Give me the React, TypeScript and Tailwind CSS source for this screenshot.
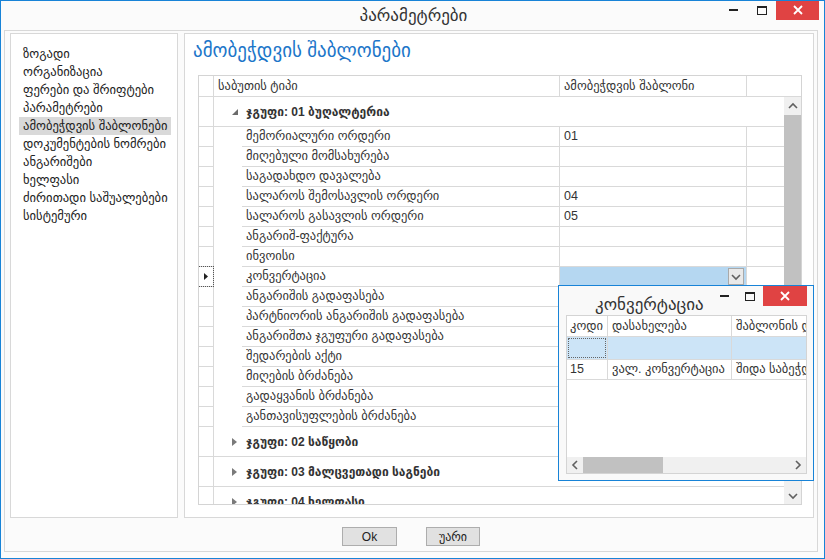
import React from "react";

const menu = [
  "ზოგადი",
  "ორგანიზაცია",
  "ფერები და შრიფტები",
  "პარამეტრები",
  "ამობეჭდვის შაბლონები",
  "დოკუმენტების ნომრები",
  "ანგარიშები",
  "ხელფასი",
  "ძირითადი საშუალებები",
  "სისტემური",
];

const rows: { name: string; tpl?: string; combo?: boolean }[] = [
  { name: "მემორიალური ორდერი", tpl: "01" },
  { name: "მიღებული მომსახურება" },
  { name: "საგადახდო დავალება" },
  { name: "სალაროს შემოსავლის ორდერი", tpl: "04" },
  { name: "სალაროს გასავლის ორდერი", tpl: "05" },
  { name: "ანგარიშ-ფაქტურა" },
  { name: "ინვოისი" },
  { name: "კონვერტაცია", combo: true },
  { name: "ანგარიშის გადაფასება" },
  { name: "პარტნიორის ანგარიშის გადაფასება" },
  { name: "ანგარიშთა ჯგუფური გადაფასება" },
  { name: "შედარების აქტი" },
  { name: "მიღების ბრძანება" },
  { name: "გადაყვანის ბრძანება" },
  { name: "განთავისუფლების ბრძანება" },
];

const Chevron = ({ dir }: { dir: "up" | "down" | "left" | "right" }) => {
  const pts = {
    up: "1,6 5,2 9,6",
    down: "1,2 5,6 9,2",
    left: "6,1 2,5 6,9",
    right: "2,1 6,5 2,9",
  }[dir];
  const vb = dir === "up" || dir === "down" ? "0 0 10 8" : "0 0 8 10";
  const size = dir === "up" || dir === "down" ? "w-[10px] h-[8px]" : "w-[8px] h-[10px]";
  return (
    <svg viewBox={vb} className={size}>
      <polyline points={pts} fill="none" stroke="#606060" strokeWidth="1.6" />
    </svg>
  );
};

const Expanded = () => (
  <svg viewBox="0 0 6 6" className="w-[6px] h-[6px]">
    <polygon points="6,0 6,6 0,6" fill="#6b6b6b" />
  </svg>
);

const Collapsed = () => (
  <svg viewBox="0 0 5 8" className="w-[5px] h-[8px]">
    <polygon points="0,0 5,4 0,8" fill="#7a7a7a" />
  </svg>
);

const WinButtons = ({ small }: { small?: boolean }) => (
  <div className="flex items-start">
    <div className={`${small ? "w-[26px]" : "w-[28px]"} h-[20px] flex items-center justify-center`}>
      <div className="w-[9px] h-[2px] bg-[#222]" />
    </div>
    <div className={`${small ? "w-[26px]" : "w-[29px]"} h-[20px] flex items-center justify-center`}>
      <div className="w-[10px] h-[9px] border border-[#222] border-t-[2px]" />
    </div>
    <div className={`${small ? "w-[44px]" : "w-[43px]"} h-[20px] bg-[#e04343] flex items-center justify-center`}>
      <svg viewBox="0 0 10 10" className="w-[10px] h-[10px]">
        <path d="M1 1 L9 9 M9 1 L1 9" stroke="white" strokeWidth="1.8" />
      </svg>
    </div>
  </div>
);

const GroupRow = ({ label, open }: { label: string; open?: boolean }) => (
  <div className="flex h-[30px] shrink-0">
    <div className="w-[15px] border-r border-b border-[#d9d9d9]" />
    <div className="flex-1 flex items-center border-b border-[#d9d9d9] pl-[18px]">
      <div className="w-[7px] flex items-center">{open ? <Expanded /> : <Collapsed />}</div>
      <span className="ml-[7px] font-bold text-[12px] text-[#333] whitespace-nowrap">{label}</span>
    </div>
  </div>
);

export default function App() {
  return (
    <div className="w-[825px] h-[559px] border border-[#1883d7] bg-[#fbfbfb] flex flex-col relative overflow-hidden text-[#222] [font-family:'Liberation_Sans','DejaVu_Sans',sans-serif]">
      {/* title */}
      <div className="h-[29px] shrink-0 flex relative">
        <div className="flex-1 flex items-center justify-center text-[17px] text-[#333] pl-[2px]">პარამეტრები</div>
        <div className="absolute right-[5px] top-[-1px]">
          <WinButtons />
        </div>
      </div>

      <div className="flex-1 flex flex-col ml-[3px] mr-[6px] mb-[6px] border border-[#d8d8d8]">
        <div className="flex-1 flex gap-[6px] pl-[5px] pr-[3px] pt-[2px]">
          {/* left menu */}
          <div className="w-[168px] bg-white border border-[#d8d8d8] pt-[11px] pl-[8px] pr-[6px]">
            {menu.map((m, i) => (
              <div
                key={m}
                className={`h-[18px] leading-[18px] px-[4px] text-[12.6px] whitespace-nowrap ${i === 4 ? "bg-[#d9d9d9]" : ""}`}
              >
                {m}
              </div>
            ))}
          </div>

          {/* right panel */}
          <div className="flex-1 bg-white border border-[#d8d8d8] flex flex-col">
            <div className="mt-[5px] pl-[8px] h-[24px] leading-[24px] text-[19px] text-[#1c76c9]">ამობეჭდვის შაბლონები</div>
            <div className="mt-[12px] ml-[13px] w-[604px] h-[430px] border border-[#d4d4d4] flex flex-col overflow-hidden text-[12.5px] text-[#333]">
              {/* header */}
              <div className="h-[21px] shrink-0 flex border-b border-[#d9d9d9]">
                <div className="w-[15px] border-r border-[#d9d9d9]" />
                <div className="w-[346px] border-r border-[#d9d9d9] pl-[4px] flex items-center">საბუთის ტიპი</div>
                <div className="w-[187px] border-r border-[#d9d9d9] pl-[4px] flex items-center">ამობეჭდვის შაბლონი</div>
                <div className="flex-1" />
              </div>
              {/* body */}
              <div className="flex-1 flex overflow-hidden">
                <div className="flex-1 flex flex-col overflow-hidden">
                  <GroupRow label="ჯგუფი: 01 ბუღალტერია" open />
                  {rows.map((r) => (
                    <div key={r.name} className="flex h-[20px] shrink-0">
                      <div className="w-[15px] border-r border-b border-[#d9d9d9] relative flex items-center justify-center">
                        {r.combo && (
                          <>
                            <div className="absolute left-[-1px] right-[-1px] top-[-1px] bottom-[-1px] border border-dotted border-[#555]" />
                            <svg viewBox="0 0 4 7" className="w-[4px] h-[7px]">
                              <polygon points="0,0 4,3.5 0,7" fill="#222" />
                            </svg>
                          </>
                        )}
                      </div>
                      <div className="w-[28px]" />
                      <div className="w-[318px] border-r border-b border-[#d9d9d9] pl-[4px] flex items-center whitespace-nowrap">{r.name}</div>
                      <div className={`w-[187px] border-r border-b border-[#d9d9d9] pl-[4px] flex items-center relative ${r.combo ? "bg-[#b5d7f1]" : ""}`}>
                        {r.tpl}
                        {r.combo && (
                          <div className="absolute right-[2px] top-[1px] w-[16px] h-[17px] border border-[#a9a9a9] bg-[#e9e9e9] flex items-center justify-center">
                            <Chevron dir="down" />
                          </div>
                        )}
                      </div>
                      <div className="flex-1 border-b border-[#d9d9d9]" />
                    </div>
                  ))}
                  <GroupRow label="ჯგუფი: 02 საწყობი" />
                  <GroupRow label="ჯგუფი: 03 მალცვეთადი საგნები" />
                  <GroupRow label="ჯგუფი: 04 ხელფასი" />
                </div>
                {/* vertical scrollbar */}
                <div className="w-[17px] bg-[#f0f0f0] flex flex-col">
                  <div className="h-[18px] flex items-center justify-center">
                    <Chevron dir="up" />
                  </div>
                  <div className="h-[200px] bg-[#c1c1c1]" />
                  <div className="flex-1" />
                  <div className="h-[17px] flex items-center justify-center">
                    <Chevron dir="down" />
                  </div>
                </div>
              </div>
            </div>
          </div>
        </div>

        {/* buttons */}
        <div className="h-[33px] shrink-0 flex justify-center gap-[29px] pt-[9px]">
          <button className="w-[55px] h-[19px] border border-[#adadad] bg-[#e1e1e1] text-[12px] text-[#222] leading-none">Ok</button>
          <button className="w-[54px] h-[19px] border border-[#adadad] bg-[#e1e1e1] text-[12px] text-[#222] leading-none">უარი</button>
        </div>
      </div>

      {/* conversion popup window */}
      <div className="absolute left-[557px] top-[284px] w-[256px] h-[196px] border border-[#1883d7] bg-[#f9f9f9] flex flex-col">
        <div className="h-[29px] shrink-0 flex items-start relative">
          <div className="pl-[36px] pt-[6px] text-[17px] text-[#333]">კონვერტაცია</div>
          <div className="absolute right-[6px] top-0">
            <WinButtons small />
          </div>
        </div>
        <div className="flex-1 ml-[7px] mr-[6px] mb-[6px] border border-[#d4d4d4] bg-white flex flex-col overflow-hidden text-[12.5px] text-[#333]">
          <div className="h-[21px] shrink-0 flex border-b border-[#d9d9d9]">
            <div className="w-[41px] border-r border-[#d9d9d9] pl-[3px] flex items-center whitespace-nowrap overflow-hidden">კოდი</div>
            <div className="w-[124px] border-r border-[#d9d9d9] pl-[4px] flex items-center whitespace-nowrap overflow-hidden">დასახელება</div>
            <div className="flex-1 pl-[4px] flex items-center whitespace-nowrap overflow-hidden">შაბლონის დასახელება</div>
          </div>
          <div className="h-[23px] shrink-0 flex border-b border-[#d9d9d9] bg-[#cce4f7]">
            <div className="w-[41px] border-r border-[#d9d9d9] relative">
              <div className="absolute inset-[1px] border border-dotted border-[#666]" />
            </div>
            <div className="w-[124px] border-r border-[#d9d9d9]" />
            <div className="flex-1" />
          </div>
          <div className="h-[20px] shrink-0 flex border-b border-[#d9d9d9]">
            <div className="w-[41px] border-r border-[#d9d9d9] pl-[3px] flex items-center">15</div>
            <div className="w-[124px] border-r border-[#d9d9d9] pl-[4px] flex items-center whitespace-nowrap overflow-hidden">ვალ. კონვერტაცია</div>
            <div className="flex-1 pl-[4px] flex items-center whitespace-nowrap overflow-hidden">შიდა საბეჭდი ფორმა</div>
          </div>
          <div className="flex-1" />
          <div className="h-[16px] shrink-0 bg-[#f0f0f0] flex items-center">
            <div className="w-[16px] flex items-center justify-center">
              <Chevron dir="left" />
            </div>
            <div className="w-[80px] h-full bg-[#c1c1c1]" />
            <div className="flex-1" />
            <div className="w-[16px] flex items-center justify-center">
              <Chevron dir="right" />
            </div>
          </div>
        </div>
      </div>
    </div>
  );
}
